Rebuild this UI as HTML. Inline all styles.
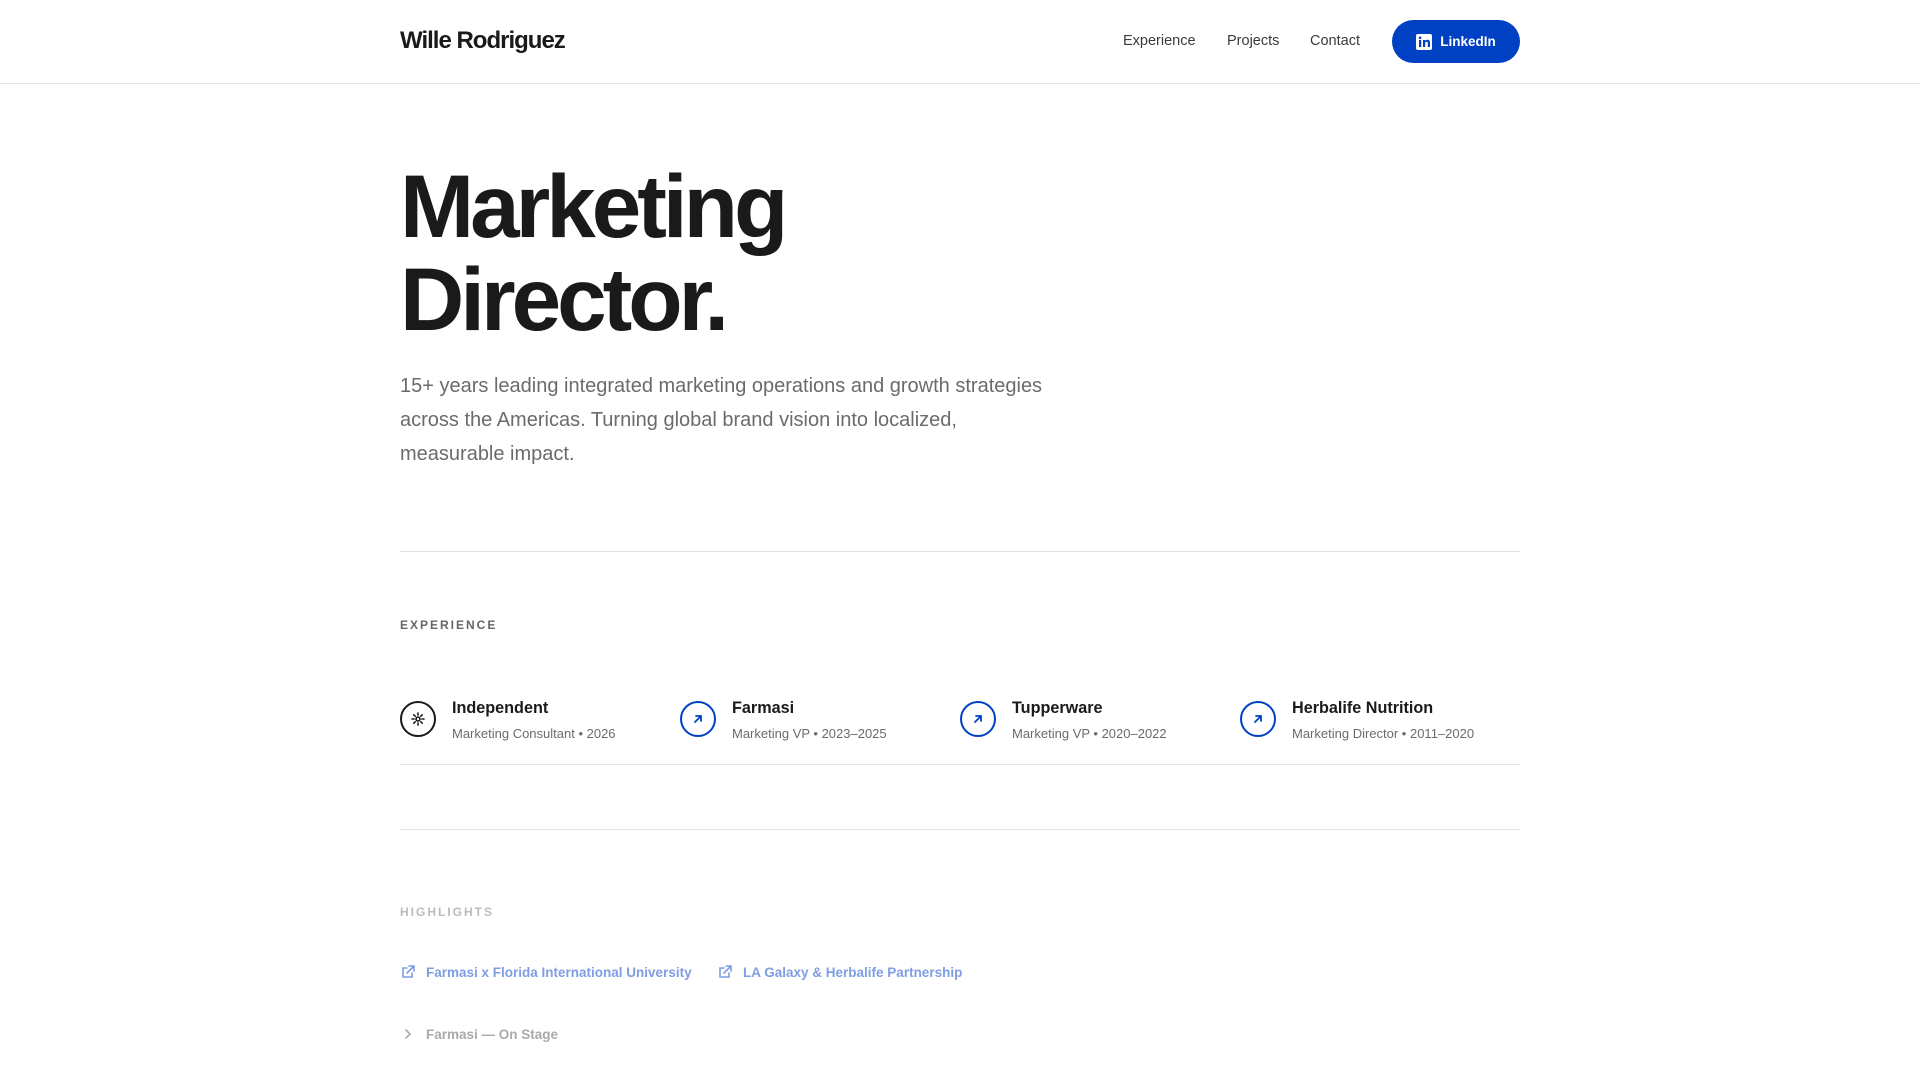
<!DOCTYPE html>
<html><head><meta charset="utf-8"><style>
*{margin:0;padding:0;box-sizing:border-box}
body{width:1920px;height:1080px;background:#fff;font-family:"Liberation Sans",sans-serif;color:#1a1a1a;overflow:hidden;position:relative}
.a{position:absolute}
.hdr{left:0;top:0;width:1920px;height:84px;border-bottom:1px solid #e3e3e3}
.logo{left:400px;top:27px;font-size:24px;font-weight:700;letter-spacing:-1px;color:#1a1a1a}
.nav{top:33px;font-size:14.5px;color:#3a3a3a}
.btn{left:1392px;top:20px;width:128px;height:43px;border-radius:22px;background:#0041c4;color:#fff;font-size:13.5px;font-weight:700;display:flex;align-items:center;justify-content:center;gap:8px}
h1{position:absolute;left:400px;top:160px;font-size:89px;line-height:93px;font-weight:700;letter-spacing:-4px;color:#1a1a1a}
.p{left:400px;top:369px;width:652px;font-size:20px;line-height:34px;color:#6b6b6b}
.hr{left:400px;width:1120px;height:1px;background:#e3e3e3}
.lbl{left:400px;font-size:12px;font-weight:700;letter-spacing:2px}
.item{top:699px;width:280px}
.ic{position:absolute;left:0;top:2px;width:36px;height:36px;border-radius:50%;border:2px solid #0041c4;display:flex;align-items:center;justify-content:center}
.t{position:absolute;left:52px;top:0;font-size:16.2px;font-weight:700;white-space:nowrap}
.s{position:absolute;left:52px;top:27px;font-size:13px;color:#6b6b6b;white-space:nowrap}
.lk{top:964px;font-size:13.5px;font-weight:700;color:#7f9de4;display:flex;align-items:center;gap:10px}
</style></head><body>
<div class="a hdr"></div>
<div class="a logo">Wille Rodriguez</div>
<div class="a nav" style="left:1123px">Experience</div>
<div class="a nav" style="left:1227px">Projects</div>
<div class="a nav" style="left:1310px">Contact</div>
<div class="a btn"><svg width="16" height="16" viewBox="0 0 16 16"><rect width="16" height="16" rx="2" fill="#fff"/><rect x="3" y="6" width="2.2" height="7" fill="#0041c4"/><circle cx="4.1" cy="3.8" r="1.3" fill="#0041c4"/><path d="M7 6h2.1v1c.5-.8 1.3-1.2 2.3-1.2 1.6 0 2.6 1 2.6 3V13h-2.2V9.3c0-1-.4-1.6-1.3-1.6-.9 0-1.3.7-1.3 1.6V13H7z" fill="#0041c4"/></svg>LinkedIn</div>
<h1>Marketing<br>Director.</h1>
<div class="a p">15+ years leading integrated marketing operations and growth strategies across the Americas. Turning global brand vision into localized, measurable impact.</div>
<div class="a hr" style="top:551px"></div>
<div class="a lbl" style="top:618px;color:#666">EXPERIENCE</div>
<div class="a item" style="left:400px"><div class="ic" style="border-color:#1a1a1a"><svg width="14" height="14" viewBox="0 0 14 14" stroke="#1a1a1a" stroke-width="1.6" stroke-linecap="round"><circle cx="7" cy="7" r="2" fill="none"/><path d="M7 1v2M7 11v2M1 7h2M11 7h2M2.8 2.8l1.4 1.4M9.8 9.8l1.4 1.4M2.8 11.2l1.4-1.4M9.8 4.2l1.4-1.4"/></svg></div><div class="t">Independent</div><div class="s">Marketing Consultant • 2026</div></div>
<div class="a item" style="left:680px"><div class="ic"><svg width="12" height="12" viewBox="0 0 12 12" stroke="#0041c4" stroke-width="1.8" fill="none" stroke-linecap="round"><path d="M3 9L9 3M4 3h5v5"/></svg></div><div class="t">Farmasi</div><div class="s">Marketing VP • 2023–2025</div></div>
<div class="a item" style="left:960px"><div class="ic"><svg width="12" height="12" viewBox="0 0 12 12" stroke="#0041c4" stroke-width="1.8" fill="none" stroke-linecap="round"><path d="M3 9L9 3M4 3h5v5"/></svg></div><div class="t">Tupperware</div><div class="s">Marketing VP • 2020–2022</div></div>
<div class="a item" style="left:1240px"><div class="ic"><svg width="12" height="12" viewBox="0 0 12 12" stroke="#0041c4" stroke-width="1.8" fill="none" stroke-linecap="round"><path d="M3 9L9 3M4 3h5v5"/></svg></div><div class="t">Herbalife Nutrition</div><div class="s">Marketing Director • 2011–2020</div></div>
<div class="a hr" style="top:764px"></div>
<div class="a hr" style="top:829px"></div>
<div class="a lbl" style="top:905px;color:#bbb">HIGHLIGHTS</div>
<div class="a lk" style="left:400px"><svg width="16" height="16" viewBox="0 0 16 16" fill="none" stroke="#7f9de4" stroke-width="1.6" stroke-linecap="round"><path d="M12 9v4H3V4h4M9 2h5v5M14 2L7 9"/></svg>Farmasi x Florida International University</div>
<div class="a lk" style="left:717px"><svg width="16" height="16" viewBox="0 0 16 16" fill="none" stroke="#7f9de4" stroke-width="1.6" stroke-linecap="round"><path d="M12 9v4H3V4h4M9 2h5v5M14 2L7 9"/></svg>LA Galaxy &amp; Herbalife Partnership</div>
<div class="a lk" style="left:400px;top:1026px;color:#aaa"><svg width="16" height="16" viewBox="0 0 16 16" fill="none" stroke="#aaa" stroke-width="1.6" stroke-linecap="round"><path d="M6 4l4 4-4 4"/></svg>Farmasi — On Stage</div>
</body></html>
